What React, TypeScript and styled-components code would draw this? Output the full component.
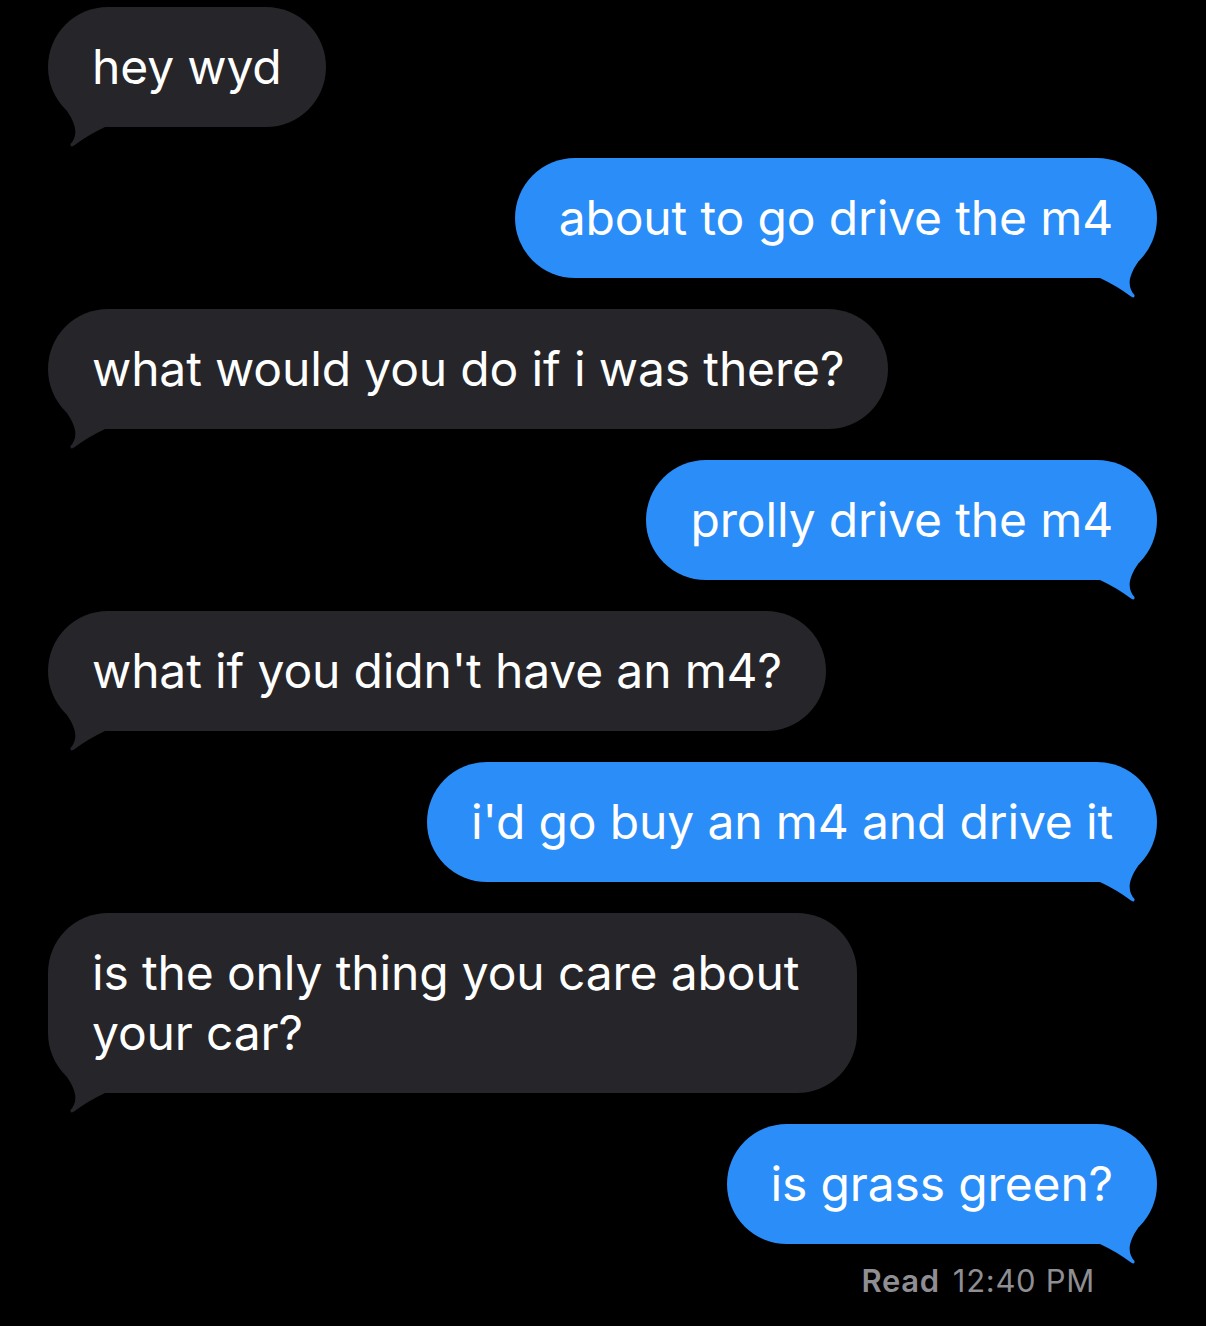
import React from 'react';
import styled, { createGlobalStyle } from 'styled-components';

type Side = 'in' | 'out';

// each entry is one bubble, lines are broken the way the phone broke them
const messages: { side: Side; lines: string[] }[] = [
  { side: 'in', lines: ['hey wyd'] },
  { side: 'out', lines: ['about to go drive the m4'] },
  { side: 'in', lines: ['what would you do if i was there?'] },
  { side: 'out', lines: ['prolly drive the m4'] },
  { side: 'in', lines: ["what if you didn't have an m4?"] },
  { side: 'out', lines: ["i'd go buy an m4 and drive it"] },
  { side: 'in', lines: ['is the only thing you care about', 'your car?'] },
  { side: 'out', lines: ['is grass green?'] },
];

const BLUE = '#2a8df8';
const GRAY = '#262529';

const GlobalStyle = createGlobalStyle`
  html, body {
    margin: 0;
    padding: 0;
    background: #000;
  }
  body {
    font-family: Inter, "Noto Sans", "Liberation Sans", sans-serif;
    -webkit-font-smoothing: antialiased;
  }
`;

const Screen = styled.div`
  min-height: 1326px;
  background: #000;
  padding: 7px 49px 0 48px;
  box-sizing: border-box;
`;

const Thread = styled.div`
  display: flex;
  flex-direction: column;
  gap: 31px;
`;

const Row = styled.div<{ side: Side }>`
  display: flex;
  justify-content: ${(p) => (p.side === 'out' ? 'flex-end' : 'flex-start')};
`;

const Bubble = styled.div<{ side: Side; multi: boolean }>`
  position: relative;
  box-sizing: border-box;
  padding: 30px ${(p) => (p.multi ? '58px' : '44px')} 30px 44px;
  border-radius: 60px;
  background: ${(p) => (p.side === 'out' ? BLUE : GRAY)};
  color: #fff;
  font-size: 48px;
  line-height: 60px;
  letter-spacing: -0.15px;
  white-space: nowrap;
`;

const Line = styled.div`
  display: block;
`;

const Tail = styled.svg<{ side: Side }>`
  position: absolute;
  bottom: -20px;
  width: 60px;
  height: 50px;
  ${(p) => (p.side === 'out' ? 'right: 0;' : 'left: 0; transform: scaleX(-1);')}
`;

const Receipt = styled.div`
  display: flex;
  justify-content: flex-end;
  gap: 13px;
  margin-top: 19px;
  padding-right: 62px;
  font-size: 31px;
  line-height: 36px;
  letter-spacing: 0.7px;
  color: #8e8e93;
`;

const Status = styled.span`
  font-weight: 600;
`;

const BubbleTail = ({ side }: { side: Side }) => (
  <Tail side={side} viewBox="0 0 60 50">
    <path
      d="M0 30 L3 30 Q20 38 34 48.5 Q38 51 37.5 47 C31 40 30 30 41 14 L40 0 L0 0 Z"
      fill={side === 'out' ? BLUE : GRAY}
    />
  </Tail>
);

export default function App() {
  return (
    <Screen>
      <GlobalStyle />
      <Thread>
        {messages.map((m, i) => (
          <Row key={i} side={m.side}>
            <Bubble side={m.side} multi={m.lines.length > 1}>
              {m.lines.map((l, j) => (
                <Line key={j}>{l}</Line>
              ))}
              <BubbleTail side={m.side} />
            </Bubble>
          </Row>
        ))}
      </Thread>
      <Receipt>
        <Status>Read</Status>
        <span>12:40 PM</span>
      </Receipt>
    </Screen>
  );
}
